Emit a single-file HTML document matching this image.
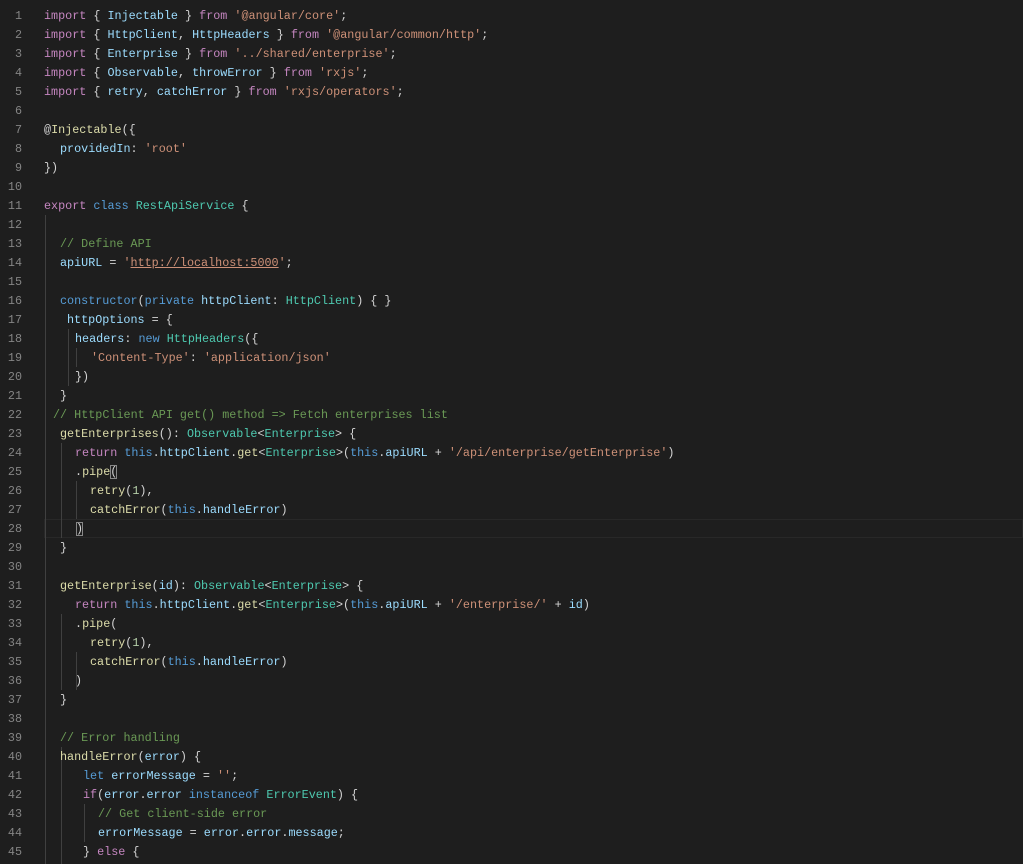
<!DOCTYPE html>
<html><head><meta charset="utf-8"><style>
html,body{margin:0;padding:0;background:#1e1e1e;width:1023px;height:864px;overflow:hidden}
.l{position:absolute;left:0;width:1023px;height:19px;line-height:19px;font-family:"Liberation Mono",monospace;font-size:11.75px;color:#d4d4d4;white-space:pre}
.n{position:absolute;left:0;top:0;width:22px;text-align:right;color:#858585}
.c{position:absolute;top:0}
.k{color:#c586c0}.v{color:#9cdcfe}.s{color:#ce9178}.t{color:#4ec9b0}.f{color:#dcdcaa}.g{color:#6a9955}.b{color:#569cd6}.m{color:#b5cea8}
.u{text-decoration:underline}
.gd{position:absolute;width:1px;background:#404040}
.cur{position:absolute;left:44px;right:0;height:17px;border:1px solid #282828}
.br{outline:1px solid #888;outline-offset:-1px}
</style></head><body>
<div class="cur" style="top:519px"></div>
<div class="gd" style="left:45px;top:215px;height:649px"></div>
<div class="gd" style="left:61px;top:443px;height:95px"></div>
<div class="gd" style="left:61px;top:614px;height:76px"></div>
<div class="gd" style="left:61px;top:747px;height:117px"></div>
<div class="gd" style="left:76px;top:481px;height:38px"></div>
<div class="gd" style="left:76px;top:652px;height:38px"></div>
<div class="gd" style="left:68px;top:329px;height:57px"></div>
<div class="gd" style="left:76px;top:348px;height:19px"></div>
<div class="gd" style="left:84px;top:804px;height:38px"></div>

<div class="l" style="top:6.5px"><span class="n">1</span><span class="c" style="left:44px"><span class="k">import</span> { <span class="v">Injectable</span> } <span class="k">from</span> <span class="s">'@angular/core'</span>;</span></div>
<div class="l" style="top:25.5px"><span class="n">2</span><span class="c" style="left:44px"><span class="k">import</span> { <span class="v">HttpClient</span>, <span class="v">HttpHeaders</span> } <span class="k">from</span> <span class="s">'@angular/common/http'</span>;</span></div>
<div class="l" style="top:44.5px"><span class="n">3</span><span class="c" style="left:44px"><span class="k">import</span> { <span class="v">Enterprise</span> } <span class="k">from</span> <span class="s">'../shared/enterprise'</span>;</span></div>
<div class="l" style="top:63.5px"><span class="n">4</span><span class="c" style="left:44px"><span class="k">import</span> { <span class="v">Observable</span>, <span class="v">throwError</span> } <span class="k">from</span> <span class="s">'rxjs'</span>;</span></div>
<div class="l" style="top:82.5px"><span class="n">5</span><span class="c" style="left:44px"><span class="k">import</span> { <span class="v">retry</span>, <span class="v">catchError</span> } <span class="k">from</span> <span class="s">'rxjs/operators'</span>;</span></div>
<div class="l" style="top:101.5px"><span class="n">6</span></div>
<div class="l" style="top:120.5px"><span class="n">7</span><span class="c" style="left:44px">@<span class="f">Injectable</span>({</span></div>
<div class="l" style="top:139.5px"><span class="n">8</span><span class="c" style="left:60px"><span class="v">providedIn</span>: <span class="s">'root'</span></span></div>
<div class="l" style="top:158.5px"><span class="n">9</span><span class="c" style="left:44px">})</span></div>
<div class="l" style="top:177.5px"><span class="n">10</span></div>
<div class="l" style="top:196.5px"><span class="n">11</span><span class="c" style="left:44px"><span class="k">export</span> <span class="b">class</span> <span class="t">RestApiService</span> {</span></div>
<div class="l" style="top:215.5px"><span class="n">12</span></div>
<div class="l" style="top:234.5px"><span class="n">13</span><span class="c" style="left:60px"><span class="g">// Define API</span></span></div>
<div class="l" style="top:253.5px"><span class="n">14</span><span class="c" style="left:60px"><span class="v">apiURL</span> = <span class="s">'<span class="u">http://localhost:5000</span>'</span>;</span></div>
<div class="l" style="top:272.5px"><span class="n">15</span></div>
<div class="l" style="top:291.5px"><span class="n">16</span><span class="c" style="left:60px"><span class="b">constructor</span>(<span class="b">private</span> <span class="v">httpClient</span>: <span class="t">HttpClient</span>) { }</span></div>
<div class="l" style="top:310.5px"><span class="n">17</span><span class="c" style="left:67px"><span class="v">httpOptions</span> = {</span></div>
<div class="l" style="top:329.5px"><span class="n">18</span><span class="c" style="left:75px"><span class="v">headers</span>: <span class="b">new</span> <span class="t">HttpHeaders</span>({</span></div>
<div class="l" style="top:348.5px"><span class="n">19</span><span class="c" style="left:91px"><span class="s">'Content-Type'</span>: <span class="s">'application/json'</span></span></div>
<div class="l" style="top:367.5px"><span class="n">20</span><span class="c" style="left:75px">})</span></div>
<div class="l" style="top:386.5px"><span class="n">21</span><span class="c" style="left:60px">}</span></div>
<div class="l" style="top:405.5px"><span class="n">22</span><span class="c" style="left:53px"><span class="g">// HttpClient API get() method =&gt; Fetch enterprises list</span></span></div>
<div class="l" style="top:424.5px"><span class="n">23</span><span class="c" style="left:60px"><span class="f">getEnterprises</span>(): <span class="t">Observable</span>&lt;<span class="t">Enterprise</span>&gt; {</span></div>
<div class="l" style="top:443.5px"><span class="n">24</span><span class="c" style="left:75px"><span class="k">return</span> <span class="b">this</span>.<span class="v">httpClient</span>.<span class="f">get</span>&lt;<span class="t">Enterprise</span>&gt;(<span class="b">this</span>.<span class="v">apiURL</span> + <span class="s">'/api/enterprise/getEnterprise'</span>)</span></div>
<div class="l" style="top:462.5px"><span class="n">25</span><span class="c" style="left:75px">.<span class="f">pipe</span><span class="br">(</span></span></div>
<div class="l" style="top:481.5px"><span class="n">26</span><span class="c" style="left:90px"><span class="f">retry</span>(<span class="m">1</span>),</span></div>
<div class="l" style="top:500.5px"><span class="n">27</span><span class="c" style="left:90px"><span class="f">catchError</span>(<span class="b">this</span>.<span class="v">handleError</span>)</span></div>
<div class="l" style="top:519.5px"><span class="n">28</span><span class="c" style="left:76px"><span class="br">)</span></span></div>
<div class="l" style="top:538.5px"><span class="n">29</span><span class="c" style="left:60px">}</span></div>
<div class="l" style="top:557.5px"><span class="n">30</span></div>
<div class="l" style="top:576.5px"><span class="n">31</span><span class="c" style="left:60px"><span class="f">getEnterprise</span>(<span class="v">id</span>): <span class="t">Observable</span>&lt;<span class="t">Enterprise</span>&gt; {</span></div>
<div class="l" style="top:595.5px"><span class="n">32</span><span class="c" style="left:75px"><span class="k">return</span> <span class="b">this</span>.<span class="v">httpClient</span>.<span class="f">get</span>&lt;<span class="t">Enterprise</span>&gt;(<span class="b">this</span>.<span class="v">apiURL</span> + <span class="s">'/enterprise/'</span> + <span class="v">id</span>)</span></div>
<div class="l" style="top:614.5px"><span class="n">33</span><span class="c" style="left:75px">.<span class="f">pipe</span>(</span></div>
<div class="l" style="top:633.5px"><span class="n">34</span><span class="c" style="left:90px"><span class="f">retry</span>(<span class="m">1</span>),</span></div>
<div class="l" style="top:652.5px"><span class="n">35</span><span class="c" style="left:90px"><span class="f">catchError</span>(<span class="b">this</span>.<span class="v">handleError</span>)</span></div>
<div class="l" style="top:671.5px"><span class="n">36</span><span class="c" style="left:75px">)</span></div>
<div class="l" style="top:690.5px"><span class="n">37</span><span class="c" style="left:60px">}</span></div>
<div class="l" style="top:709.5px"><span class="n">38</span></div>
<div class="l" style="top:728.5px"><span class="n">39</span><span class="c" style="left:60px"><span class="g">// Error handling</span></span></div>
<div class="l" style="top:747.5px"><span class="n">40</span><span class="c" style="left:60px"><span class="f">handleError</span>(<span class="v">error</span>) {</span></div>
<div class="l" style="top:766.5px"><span class="n">41</span><span class="c" style="left:83px"><span class="b">let</span> <span class="v">errorMessage</span> = <span class="s">''</span>;</span></div>
<div class="l" style="top:785.5px"><span class="n">42</span><span class="c" style="left:83px"><span class="k">if</span>(<span class="v">error</span>.<span class="v">error</span> <span class="b">instanceof</span> <span class="t">ErrorEvent</span>) {</span></div>
<div class="l" style="top:804.5px"><span class="n">43</span><span class="c" style="left:98px"><span class="g">// Get client-side error</span></span></div>
<div class="l" style="top:823.5px"><span class="n">44</span><span class="c" style="left:98px"><span class="v">errorMessage</span> = <span class="v">error</span>.<span class="v">error</span>.<span class="v">message</span>;</span></div>
<div class="l" style="top:842.5px"><span class="n">45</span><span class="c" style="left:83px">} <span class="k">else</span> {</span></div>
</body></html>
